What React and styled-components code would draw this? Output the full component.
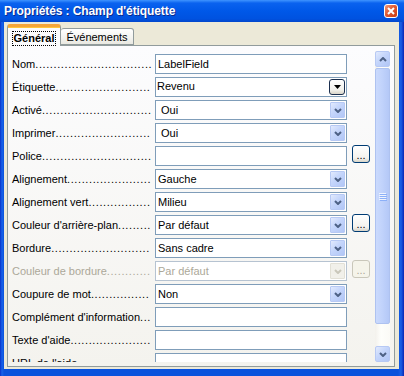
import React, { useMemo } from 'react';
import styled, { createGlobalStyle } from 'styled-components';

const GlobalStyle = createGlobalStyle`
  html, body {
    margin: 0;
    padding: 0;
    background: #ffffff;
  }
  body {
    font-family: 'Liberation Sans', Arial, sans-serif;
    font-size: 11px;
    color: #000;
  }
`;

const rows = [
  { label: 'Nom', kind: 'text', value: 'LabelField' },
  { label: 'Étiquette', kind: 'classic', value: 'Revenu', pad: 1 },
  { label: 'Activé', kind: 'combo', value: 'Oui', pad: 5 },
  { label: 'Imprimer', kind: 'combo', value: 'Oui', pad: 5 },
  { label: 'Police', kind: 'text', value: '', more: true },
  { label: 'Alignement', kind: 'combo', value: 'Gauche' },
  { label: 'Alignement vert', kind: 'combo', value: 'Milieu' },
  { label: "Couleur d'arrière-plan", kind: 'combo', value: 'Par défaut', more: true },
  { label: 'Bordure', kind: 'combo', value: 'Sans cadre' },
  { label: 'Couleur de bordure', kind: 'combo', value: 'Par défaut', more: true, disabled: true },
  { label: 'Coupure de mot', kind: 'combo', value: 'Non' },
  { label: "Complément d'information", kind: 'text', value: '' },
  { label: "Texte d'aide", kind: 'text', value: '' },
  { label: "URL de l'aide", kind: 'text', value: '' },
];

const LABEL_WIDTH = 141;
const DOT_SPACING = 0.6;

// fill each label up to the field with leader dots
function useLeaders(labels) {
  return useMemo(() => {
    const ctx = document.createElement('canvas').getContext('2d');
    ctx.font = "11px 'Liberation Sans', Arial, sans-serif";
    const dot = ctx.measureText('.').width + DOT_SPACING;
    return labels.map((l) => {
      const w = ctx.measureText(l).width;
      const n = Math.max(0, Math.floor((LABEL_WIDTH - w) / dot));
      return '.'.repeat(n);
    });
  }, [labels]);
}

function Chevron({ up, color = '#4d6185' }) {
  return (
    <svg width="8" height="5" viewBox="0 0 8 5">
      <path
        d={up ? 'M1 4 L4 1 L7 4' : 'M1 1 L4 4 L7 1'}
        fill="none"
        stroke={color}
        strokeWidth="2"
      />
    </svg>
  );
}

const labels = rows.map((r) => r.label);

export default function App() {
  const leaders = useLeaders(labels);

  return (
    <>
      <GlobalStyle />
      <Window>
        <TitleBar>
          <Title>Propriétés : Champ d'étiquette</Title>
          <CloseButton>
            <svg width="8" height="8" viewBox="0 0 8 8">
              <path d="M1 1 L7 7 M7 1 L1 7" stroke="#fff" strokeWidth="2" />
            </svg>
          </CloseButton>
        </TitleBar>

        <Body>
          <Tabs>
            <Tab active>
              <FocusText>Général</FocusText>
            </Tab>
            <Tab>Événements</Tab>
          </Tabs>

          <Panel>
            <RowsArea>
              {rows.map((row, i) => (
                <Row key={row.label}>
                  <Label disabled={row.disabled}>
                    {row.label}
                    <Dots>{leaders[i]}</Dots>
                  </Label>
                  <Field disabled={row.disabled}>
                    <FieldText pad={row.pad} disabled={row.disabled} raised={row.kind === 'classic'}>
                      {row.value}
                    </FieldText>
                    {row.kind === 'combo' && (
                      <ComboButton disabled={row.disabled}>
                        <Chevron color={row.disabled ? '#c9c7ba' : '#4d6185'} />
                      </ComboButton>
                    )}
                    {row.kind === 'classic' && (
                      <ClassicButton>
                        <svg width="7" height="4" viewBox="0 0 7 4">
                          <path d="M0 0 L7 0 L3.5 4 Z" fill="#000" />
                        </svg>
                      </ClassicButton>
                    )}
                  </Field>
                  {row.more && <MoreButton disabled={row.disabled}>...</MoreButton>}
                </Row>
              ))}
            </RowsArea>

            <ScrollBar>
              <ScrollArrow>
                <Chevron up />
              </ScrollArrow>
              <Thumb>
                <Grip />
                <Grip />
                <Grip />
                <Grip />
              </Thumb>
              <Track />
              <ScrollArrow>
                <Chevron />
              </ScrollArrow>
            </ScrollBar>
          </Panel>
        </Body>
      </Window>
    </>
  );
}

const Window = styled.div`
  width: 404px;
  height: 376px;
  display: flex;
  flex-direction: column;
  background: linear-gradient(to right, #0831c8 0px, #1863ea 2px, #0a52dc 4px, #0a52dc 398px, #1a5fe6 401px, #0626b4 404px);
  box-sizing: border-box;
  overflow: hidden;
`;

const TitleBar = styled.div`
  height: 22px;
  display: flex;
  align-items: center;
  justify-content: space-between;
  padding: 0 6px 0 4px;
  background: linear-gradient(
    to bottom,
    #3f94ff 0%,
    #0a62ef 14%,
    #0058e8 50%,
    #0052e0 85%,
    #0347cc 100%
  );
  flex-shrink: 0;
`;

const Title = styled.div`
  color: #ffffff;
  font-weight: bold;
  font-size: 12px;
  letter-spacing: -0.1px;
  text-shadow: 1px 1px 0 #0b2a8c;
  white-space: nowrap;
`;

const CloseButton = styled.div`
  width: 14px;
  height: 14px;
  box-sizing: border-box;
  border: 1px solid #ffffff;
  border-radius: 3px;
  background: linear-gradient(135deg, #f39a78 0%, #e05a34 45%, #c83b12 100%);
  display: flex;
  align-items: center;
  justify-content: center;
`;

const Body = styled.div`
  flex: 1;
  margin: 0 5px 7px 4px;
  background: #ece9d8;
  display: flex;
  flex-direction: column;
  padding: 2px 4px 2px 3px;
`;

const Tabs = styled.div`
  display: flex;
  align-items: flex-end;
  height: 21px;
  position: relative;
  z-index: 1;
`;

const Tab = styled.div`
  box-sizing: border-box;
  height: ${(p) => (p.active ? '22px' : '17px')};
  margin-bottom: ${(p) => (p.active ? '-1px' : '0')};
  padding: ${(p) => (p.active ? '5px 2px 0 2px' : '2px 5px 0 5px')};
  width: ${(p) => (p.active ? '54px' : '73px')};
  border: 1px solid #919b9c;
  border-left: ${(p) => (p.active ? '1px solid #919b9c' : 'none')};
  border-bottom: ${(p) => (p.active ? 'none' : '1px solid #919b9c')};
  border-top: ${(p) => (p.active ? '3px solid #f5a53a' : '1px solid #919b9c')};
  border-radius: 3px 3px 0 0;
  background: ${(p) =>
    p.active ? '#fcfcfe' : 'linear-gradient(to bottom, #ffffff, #f3f3ef 60%, #e9e8e1)'};
  font-weight: ${(p) => (p.active ? 'bold' : 'normal')};
  font-size: 11px;
  white-space: nowrap;
  text-align: center;
  box-shadow: ${(p) => (p.active ? 'inset 0 1px 0 #ffc73c' : 'none')};
`;

const FocusText = styled.span`
  display: inline-block;
  outline: 1px dotted #000;
  outline-offset: 0;
  padding: 0 1px;
  line-height: 13px;
`;

const Panel = styled.div`
  height: 322px;
  box-sizing: border-box;
  border: 1px solid #919b9c;
  background: linear-gradient(to bottom, #fcfcfe, #f4f3ee);
  display: flex;
  padding: 5px 4px 4px 0;
`;

const RowsArea = styled.div`
  flex: 1;
  height: 311px;
  overflow: hidden;
  display: flex;
  flex-direction: column;
  gap: 3px;
  padding: 3px 0 0 4px;
  box-sizing: border-box;
`;

const Row = styled.div`
  display: flex;
  align-items: center;
  height: 20px;
  flex-shrink: 0;
`;

const Label = styled.div`
  width: ${LABEL_WIDTH}px;
  margin-right: 2px;
  white-space: nowrap;
  color: ${(p) => (p.disabled ? '#aca899' : '#000')};
`;

const Dots = styled.span`
  letter-spacing: ${DOT_SPACING}px;
`;

const Field = styled.div`
  width: 192px;
  height: 20px;
  box-sizing: border-box;
  border: 1px solid ${(p) => (p.disabled ? '#b6c3d1' : '#7f9db9')};
  background: #ffffff;
  display: flex;
  align-items: stretch;
`;

const FieldText = styled.div`
  flex: 1;
  display: flex;
  align-items: center;
  padding-left: ${(p) => (p.pad !== undefined ? p.pad : 2)}px;
  padding-bottom: ${(p) => (p.raised ? 3 : 0)}px;
  color: ${(p) => (p.disabled ? '#aca899' : '#000')};
  white-space: nowrap;
`;

const ComboButton = styled.div`
  width: 15px;
  margin: 1px;
  box-sizing: border-box;
  border: 1px solid ${(p) => (p.disabled ? '#e2e0d6' : '#b7c9f4')};
  border-radius: 1px;
  background: ${(p) =>
    p.disabled
      ? '#f1f0ea'
      : 'linear-gradient(135deg, #e2eafd 0%, #c4d5fb 45%, #b1c6f6 100%)'};
  display: flex;
  align-items: center;
  justify-content: center;
`;

const ClassicButton = styled.div`
  width: 16px;
  margin: 1px 1px 1px 0;
  box-sizing: border-box;
  border: 1px solid #1b2f4f;
  border-radius: 3px;
  background: linear-gradient(to bottom, #ffffff, #f2f1ec 70%, #d9d5c9);
  display: flex;
  align-items: center;
  justify-content: center;
`;

const MoreButton = styled.div`
  width: 18px;
  height: 18px;
  margin-left: 5px;
  align-self: flex-start;
  margin-top: -1px;
  box-sizing: border-box;
  border: 1px solid ${(p) => (p.disabled ? '#c9c7ba' : '#003c74')};
  border-radius: 3px;
  background: ${(p) =>
    p.disabled ? '#f5f4ea' : 'linear-gradient(to bottom, #ffffff, #f3f2ed 75%, #d8d4c8)'};
  color: ${(p) => (p.disabled ? '#aca899' : '#000')};
  display: flex;
  align-items: flex-end;
  justify-content: center;
  line-height: 12px;
  font-size: 11px;
  padding-bottom: 1px;
`;

const ScrollBar = styled.div`
  width: 15px;
  height: 311px;
  display: flex;
  flex-direction: column;
  background: linear-gradient(to right, #f3f1ec, #fefefb 40%, #fbfaf6);
`;

const ScrollArrow = styled.div`
  height: 16px;
  flex-shrink: 0;
  box-sizing: border-box;
  border: 1px solid #b7c9f4;
  border-radius: 2px;
  background: linear-gradient(135deg, #e2eafd 0%, #c4d5fb 45%, #b1c6f6 100%);
  display: flex;
  align-items: center;
  justify-content: center;
`;

const Thumb = styled.div`
  height: 256px;
  margin-top: 1px;
  flex-shrink: 0;
  box-sizing: border-box;
  border: 1px solid #aec2f0;
  border-radius: 2px;
  background: linear-gradient(to right, #cbdafd, #c0d2fb 50%, #b4c8f7);
  display: flex;
  flex-direction: column;
  align-items: center;
  justify-content: center;
  gap: 1px;
`;

const Grip = styled.div`
  width: 7px;
  height: 1px;
  background: #eef3fe;
  box-shadow: 1px 1px 0 #8cb0f8;
`;

const Track = styled.div`
  flex: 1;
`;
